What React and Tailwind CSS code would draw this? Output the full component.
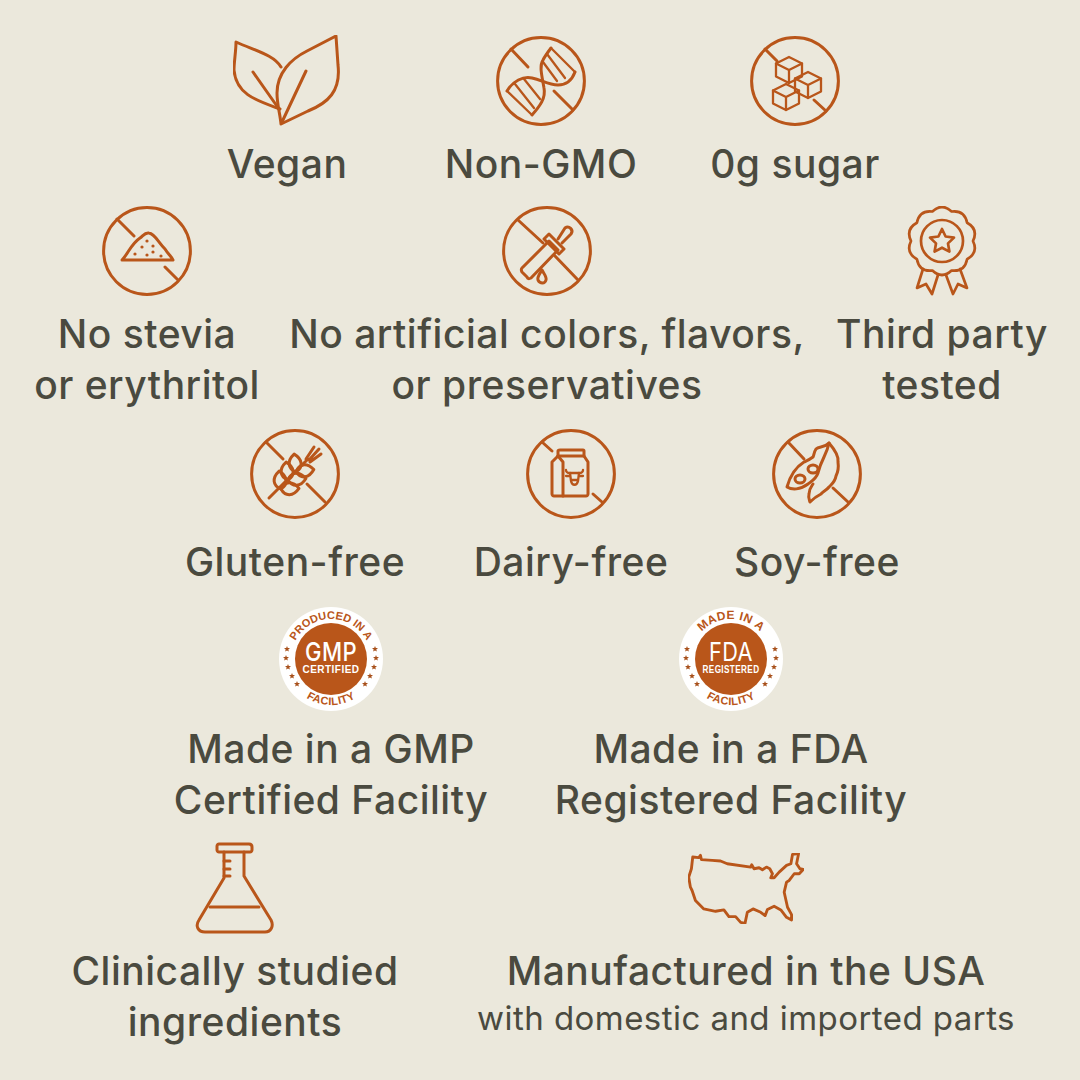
import React from "react";

const ORANGE = "#b9561a";

// line icons are all drawn in the same stroke, only the viewBox differs
const Icon = ({ box, w, h, sw = 3, children }) => (
  <svg
    viewBox={box}
    width={w}
    height={h}
    fill="none"
    stroke={ORANGE}
    strokeWidth={sw}
    strokeLinecap="round"
    strokeLinejoin="round"
  >
    {children}
  </svg>
);

const Ban = ({ children }) => (
  <Icon box="0 0 90 90" w={90} h={90}>
    <circle cx="45" cy="45" r="43.4" />
    {children}
  </Icon>
);

const Cube = ({ x, y, s = 12 }) => (
  <g strokeWidth="2.3">
    <path d={`M${x},${y - s} L${x + s},${y - s / 2} L${x + s},${y + s / 2} L${x},${y + s} L${x - s},${y + s / 2} L${x - s},${y - s / 2} Z`} />
    <path d={`M${x - s},${y - s / 2} L${x},${y} L${x + s},${y - s / 2} M${x},${y} L${x},${y + s}`} />
  </g>
);

const Leaf = () => (
  <Icon box="0 0 108 92" w={108} h={92}>
    <path d="M47,30 C40,18 22,14 2,5 C2,14 0,25 0,33 C2,58 24,64 46,72" transform="translate(1,2)" />
    <path d="M48,89 L75,76 C95,68 108,56 105,30 L103,1 L74,16 C58,24 44,38 44,58 C44,70 47,78 48,89 Z" />
    <path d="M20,37 L46,74 M73,36 L49,87" />
  </Icon>
);

const Dna = () => (
  <Ban>
    <path d="M15,13 L32,31 M58,55 L77,74" />
    <path d="M11,55 C17,45 27,40 36,42 C46,44 52,49 62,49 C70,49 76,44 79,36" />
    <path d="M36,79 C44,70 50,62 48,52 C46,40 43,30 47,24 C49,20 52,16 55,12" />
    <g strokeWidth="2.3">
      <path d="M55,12 L79,36 M11,55 L36,79" />
      <path d="M51,18 L69,42 M47,26 L61,45" />
      <path d="M19,48 L38,72 M28,43 L44,63" />
    </g>
  </Ban>
);

const Sugar = () => (
  <Ban>
    <path d="M15,13 L27,25 M64,64 L76,75" />
    <Cube x={39} y={34} s={13} />
    <Cube x={58} y={49} s={13} />
    <Cube x={36} y={61} s={13} />
  </Ban>
);

const Stevia = () => (
  <Ban>
    <path d="M15,13 L32,30 M63,61 L76,74" />
    <path d="M20,54 C26,48 29,38 38,32 C41,30 43,26 47,27 C53,28 56,36 63,43 C66,48 70,51 71,54 Z" />
    <g fill={ORANGE} stroke="none">
      <circle cx="45" cy="35" r="1.6" />
      <circle cx="40" cy="41" r="1.6" />
      <circle cx="51" cy="40" r="1.6" />
      <circle cx="33" cy="48" r="1.6" />
      <circle cx="45" cy="49" r="1.6" />
      <circle cx="51" cy="46" r="1.6" />
      <circle cx="59" cy="50" r="1.6" />
    </g>
  </Ban>
);

const Dropper = () => (
  <Ban>
    <path d="M16,14 L41,37 M53,50 L76,74" />
    <path d="M20,62 L47,35 L56,44 L29,72 C27,73 26,73 25,71 L20,66 C19,64 19,63 20,62 Z" />
    <path d="M47,28 L62,43 L57,48 L42,33 Z" />
    <path d="M56,33 L63,22 C67,19 72,24 69,28 L60,37" />
    <path d="M40,64 C37,69 35,71 36,74 C38,78 43,78 44,74 C45,71 42,68 40,64 Z" />
  </Ban>
);

// scalloped rosette outline, lobes every 36 degrees
const rosette = () => {
  const cx = 35;
  const cy = 35;
  let d = "";
  for (let i = 0; i < 10; i++) {
    const a0 = ((i * 36 - 90 - 18) * Math.PI) / 180;
    const a1 = ((i * 36 - 90) * Math.PI) / 180;
    const a2 = ((i * 36 - 90 + 18) * Math.PI) / 180;
    const p = (a, r) => `${(cx + r * Math.cos(a)).toFixed(1)},${(cy + r * Math.sin(a)).toFixed(1)}`;
    if (i === 0) d += `M${p(a0, 31)} `;
    d += `Q${p(a1, 38.5)} ${p(a2, 31)} `;
  }
  return d + "Z";
};

const Ribbon = () => (
  <Icon box="0 0 70 90" w={70} h={90} sw={2.7}>
    <path d={rosette()} />
    <circle cx="35" cy="35" r="21" />
    <path d="M35,23 L38.6,30.5 L47,31.6 L41,37.4 L42.4,45.6 L35,41.7 L27.6,45.6 L29,37.4 L23,31.6 L31.4,30.5 Z" />
    <path d="M16,63 L10,82 L19,78 L25,88 L31,69" />
    <path d="M53,63 L60,82 L51,78 L46,88 L39,69" />
  </Icon>
);

const Kernel = ({ x, y, r }) => (
  <path d="M0,0 C-8,-4 -8,-12 0,-18 C8,-12 8,-4 0,0 Z" transform={`translate(${x},${y}) rotate(${r})`} />
);

const Wheat = () => (
  <Ban>
    <path d="M16,13 L33,30 M57,55 L75,73" />
    <path d="M19,69 L58,30 M56,30 L64,18 M59,31 L69,20 M60,33 L71,25" />
    <Kernel x={31} y={60} r={-6} />
    <Kernel x={38} y={51} r={-6} />
    <Kernel x={46} y={43} r={-6} />
    <Kernel x={31} y={60} r={88} />
    <Kernel x={38} y={51} r={85} />
    <Kernel x={46} y={43} r={82} />
  </Ban>
);

const Milk = () => (
  <Ban>
    <path d="M16,13 L26,22 M67,65 L76,73" />
    <path d="M32,27 L26,33 L26,65 C26,66 27,67 28,67 L60,67 C61,67 62,66 62,65 L62,33 L58,27 Z" />
    <path d="M32,27 L32,22 C32,21 33,21 34,21 L57,21 C58,21 58,21 58,22 L58,27" />
    <path d="M32,27 L37,33 L37,67" />
    <g strokeWidth="2.3">
      <path d="M40,41 C40,44 43,44 44,44 L53,44 C54,44 57,44 57,41" />
      <path d="M44,44 L45,52 C46,57 51,57 52,52 L53,44 M45,51 L52,51 M40,47 L44,47 M53,47 L57,47" />
    </g>
  </Ban>
);

const Soy = () => (
  <Ban>
    <path d="M16,13 L32,30 M61,59 L76,73" />
    <path d="M57,14 C52,19 47,17 44,20 C42,23 42,26 41,28 C37,31 34,32 32,33 C24,38 18,47 15,58 C20,61 28,61 36,55 C40,52 44,50 46,44 C47,40 51,30 52,28 C54,24 56,19 57,14 Z" />
    <path d="M57,14 C63,21 67,28 66,33 C67,40 66,43 64,47 C63,53 60,55 57,58 C54,62 50,63 49,65 C45,67 41,70 38,73 C37,70 36,68 37,65 C37,60 39,58 41,55" />
    <ellipse cx="41" cy="40" rx="5" ry="4" />
    <ellipse cx="28" cy="50" rx="5" ry="4" />
  </Ban>
);

const Flask = () => (
  <Icon box="0 0 82 92" w={82} h={92}>
    <path d="M25,2 L55,2 C57,2 58,3 58,5 L58,8 C58,9 57,10 56,10 L25,10 C24,10 23,9 23,8 L23,4 C23,3 24,2 25,2 Z" />
    <path d="M30,10 L30,36 L5,78 C1,84 4,90 11,90 L71,90 C77,90 80,84 77,78 L50,34 L50,10" />
    <path d="M16,65 L65,65 M30,19 L36,19 M30,27 L36,27 M30,34 L36,34" />
  </Icon>
);

const Usa = () => (
  <Icon box="28 38 346 212" w={116} h={71} sw={8.5}>
    <path d="M42,50 L60,52 L65,45 L68,58 L100,60 L125,62 L145,70 L215,80 L218,73 L225,85 L240,82 L250,88 L262,80 L272,85 L280,100 L275,112 L285,112 L300,95 L322,75 L335,70 L340,42 L358,40 L352,70 L362,85 L372,87 L360,100 L345,100 L330,120 L322,125 L315,155 L325,200 L337,222 L337,238 L322,230 L305,208 L285,197 L265,207 L258,225 L245,215 L222,205 L205,215 L198,248 L185,245 L170,228 L150,228 L135,208 L110,212 L75,205 L50,180 L40,150 L35,140 L30,110 L38,85 Z" />
  </Icon>
);

const STARS = [
  [8, 42], [7, 51], [9, 60], [13, 69], [18, 77],
  [96, 42], [97, 51], [95, 60], [91, 69], [86, 77],
];

const Badge = ({ id, top, topSize, topSpacing, big, bigLen, bigWeight, small, smallSize }) => (
  <svg viewBox="0 0 104 104" width={104} height={104} fontFamily="Liberation Sans, sans-serif">
    <defs>
      <path id={`${id}-top`} d="M12,52 A40,40 0 0 1 92,52" />
      <path id={`${id}-bot`} d="M6,52 A46,46 0 0 0 98,52" />
    </defs>
    <circle cx="52" cy="52" r="52" fill="#ffffff" />
    <circle cx="52" cy="52" r="36" fill="#b9561a" />
    <text fontSize={topSize} letterSpacing={topSpacing} fontWeight="700" fill="#b9561a" textAnchor="middle">
      <textPath href={`#${id}-top`} startOffset="50%">{top}</textPath>
    </text>
    <text fontSize="11" letterSpacing="0.4" fontWeight="700" fill="#b9561a" textAnchor="middle">
      <textPath href={`#${id}-bot`} startOffset="50%">FACILITY</textPath>
    </text>
    <g fill="#a8511c">
      {STARS.map(([x, y]) => (
        <polygon
          key={`${x}-${y}`}
          transform={`translate(${x},${y})`}
          points="0,-3 0.8,-1 3,-0.9 1.3,0.5 1.9,2.6 0,1.4 -1.9,2.6 -1.3,0.5 -3,-0.9 -0.8,-1"
        />
      ))}
    </g>
    <text x="52" y="54" fontSize="26" fontFamily="Inter, sans-serif" fontWeight={bigWeight} fill="#ffffff" textAnchor="middle" textLength={bigLen} lengthAdjust="spacingAndGlyphs">{big}</text>
    <text x="52" y="66" fontSize={smallSize} fontWeight="700" fill="#ffffff" textAnchor="middle" textLength="57" lengthAdjust="spacingAndGlyphs">{small}</text>
  </svg>
);

const Item = ({ width, icon, lines, gap = "mt-3", sub }) => (
  <div className={`flex flex-col items-center shrink-0 ${width}`}>
    <div className="flex h-[90px] items-center justify-center">{icon}</div>
    <div className={`${gap} text-center whitespace-nowrap leading-[51px]`}>
      {lines.map((l) => (
        <div key={l}>{l}</div>
      ))}
      {sub && <div className="text-[33px] font-normal tracking-[0.45px] leading-[44px]">{sub}</div>}
    </div>
  </div>
);

export default function App() {
  return (
    <div className="w-[1080px] h-[1080px] overflow-hidden bg-[#ebe8dc] text-[#4a4a3f] text-[39px] font-medium font-['Inter',sans-serif] pt-[36px] tracking-[0.5px]">
      <div className="flex pl-[187px] gap-[54px]">
        <Item width="w-[200px]" icon={<Leaf />} lines={["Vegan"]} />
        <Item width="w-[200px]" icon={<Dna />} lines={["Non-GMO"]} />
        <Item width="w-[200px]" icon={<Sugar />} lines={["0g sugar"]} />
      </div>

      <div className="flex pl-[34px] mt-[17px]">
        <Item width="w-[226px]" icon={<Stevia />} lines={["No stevia", "or erythritol"]} />
        <Item width="w-[512px] ml-[31px]" icon={<Dropper />} lines={["No artificial colors, flavors,", "or preservatives"]} />
        <Item width="w-[212px] ml-[33px]" icon={<Ribbon />} lines={["Third party", "tested"]} />
      </div>

      <div className="flex pl-[181px] mt-[19px]">
        <Item width="w-[228px]" gap="mt-[17px]" icon={<Wheat />} lines={["Gluten-free"]} />
        <Item width="w-[200px] ml-[62px]" gap="mt-[17px]" icon={<Milk />} lines={["Dairy-free"]} />
        <Item width="w-[170px] ml-[61px]" gap="mt-[17px]" icon={<Soy />} lines={["Soy-free"]} />
      </div>

      <div className="flex pl-[171px] mt-[20px]">
        <div className="flex flex-col items-center w-[320px]">
          <Badge id="gmp" top="PRODUCED IN A" topSize={11} topSpacing={0} big="GMP" bigLen={52} bigWeight={500} small="CERTIFIED" smallSize={11} />
          <div className="mt-3 text-center whitespace-nowrap leading-[51px]">
            <div>Made in a GMP</div>
            <div>Certified Facility</div>
          </div>
        </div>
        <div className="flex flex-col items-center w-[360px] ml-[60px]">
          <Badge id="fda" top="MADE IN A" topSize={12} topSpacing={0.4} big="FDA" bigLen={44} bigWeight={400} small="REGISTERED" smallSize={10.5} />
          <div className="mt-3 text-center whitespace-nowrap leading-[51px]">
            <div>Made in a FDA</div>
            <div>Registered Facility</div>
          </div>
        </div>
      </div>

      <div className="flex pl-[65px] mt-[18px]">
        <Item width="w-[340px]" icon={<Flask />} lines={["Clinically studied", "ingredients"]} />
        <Item width="w-[540px] ml-[71px]" icon={<Usa />} lines={["Manufactured in the USA"]} sub="with domestic and imported parts" />
      </div>
    </div>
  );
}
